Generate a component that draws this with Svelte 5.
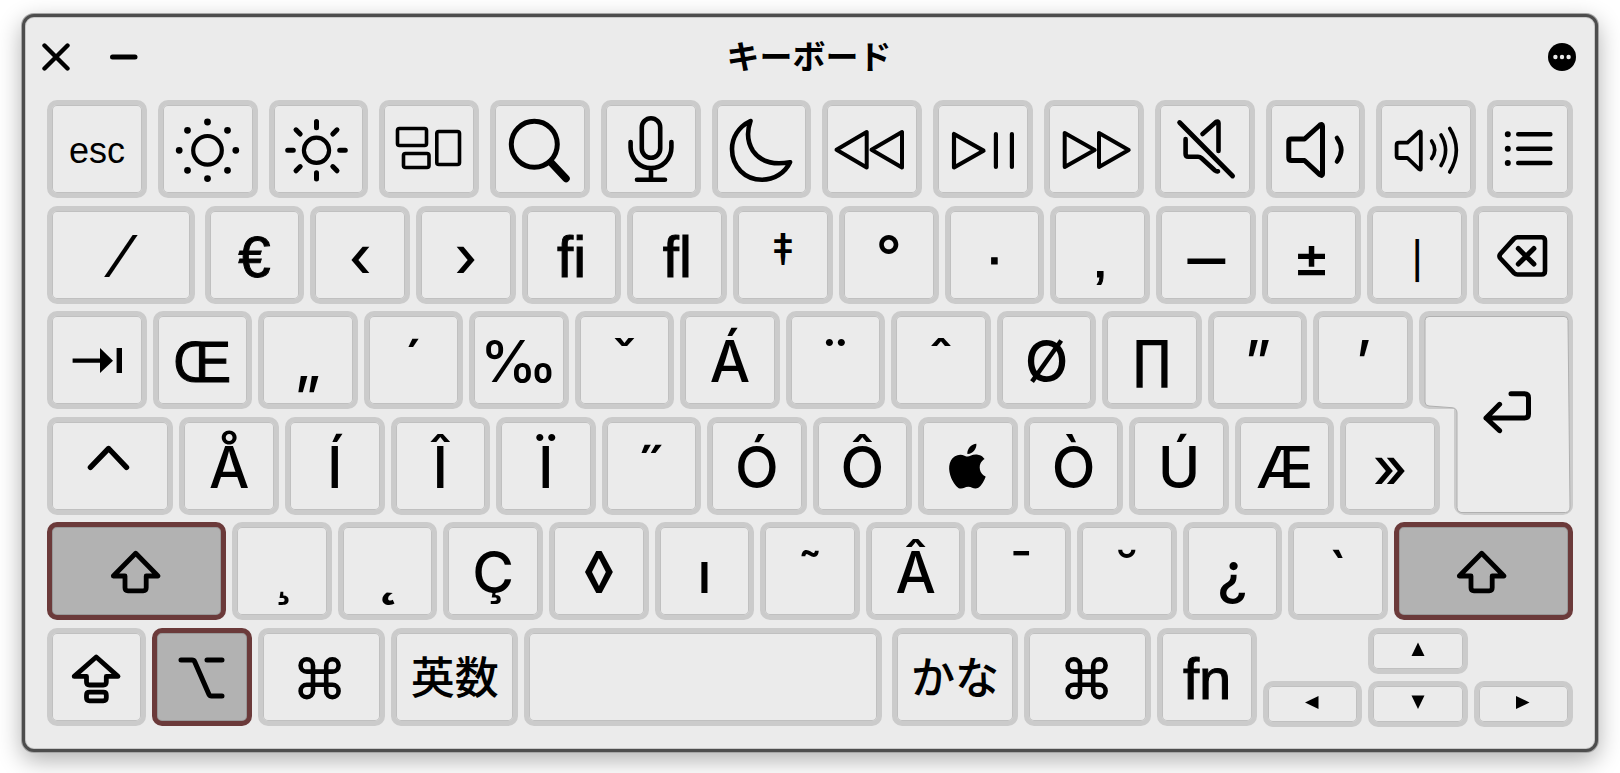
<script lang="ts">
interface Key {
  w: number;
  label?: string;
  icon?: string;
  name?: string;
  kind?: string;
  toggle?: boolean;
}

interface Icon {
  strokes?: [number, string][];
  fill?: string;
}

const circle = (x: number, y: number, r: number) =>
  `M${x - r} ${y}a${r} ${r} 0 1 0 ${2 * r} 0a${r} ${r} 0 1 0 ${-2 * r} 0z`;

// all icons are drawn around the centre of the key
const ICONS: Record<string, Icon> = {
  dim: {
    strokes: [[4.2, circle(-0.5, 1.3, 14.3)]],
    fill: [[0, -28.3], [20, -20], [28.3, 0], [20, 20], [0, 28.3], [-20, 20], [-28.3, 0], [-20, -20]]
      .map(([x, y]) => circle(x - 0.5, y + 1.3, 3.4))
      .join(''),
  },
  bright: {
    strokes: [
      [4.2, circle(-1.5, 1.3, 12.6)],
      [5, 'M-1.5-27.5v6.3M-1.5 23.8v6.3M-30.3 1.3h5.6M21.7 1.3h5.6M-22-19.2l4.2 4.2M19-19.2l-4.2 4.2M-22 21.8l4.2-4.2M19 21.8l-4.2-4.2'],
    ],
  },
  mission: {
    strokes: [[3.6, 'M-29.5-20.5h25q2 0 2 2v13q0 2-2 2h-25q-2 0-2-2v-13q0-2 2-2zM-23.5 4.5h21.5q2 0 2 2v10q0 2-2 2h-21.5q-2 0-2-2v-10q0-2 2-2zM9.8-17.5h18.7q2 0 2 2v29q0 2-2 2h-18.7q-2 0-2-2v-29q0-2 2-2z']],
  },
  search: { strokes: [[5, circle(-5.7, -4.7, 23)], [7.5, 'M11 13.5L26 29.5']] },
  mic: {
    strokes: [
      [4.6, 'M-9.2-21.6a9.2 9.2 0 0 1 18.4 0V-.4a9.2 9.2 0 0 1-18.4 0zM-20.4-7v5.6a20.4 20.4 0 0 0 40.8 0V-7M0 19V30M-14 30.7H14'],
    ],
  },
  moon: { strokes: [[4.6, 'M-11.5-28C-24-22-30-11-30 0C-30 18-17 30.7 0 30.7C12 30.7 23 24 28 13.2C10 16.5-2 12-9 2C-14-6-15.5-17-11.5-28z']] },
  rewind: { strokes: [[4, 'M-35.5.7L-5.3-17V18.4zM-.5.7L30-17V18.4z']] },
  play: { strokes: [[4.2, 'M-29-15V18.5L.5 1.7zM12.9-15V18M28.9-15V18']] },
  forward: { strokes: [[4, 'M-29.3-16V18L.7 1zM5-16V18L34.7 1z']] },
  mute: {
    strokes: [
      [4.8, 'M-25.4-26.5L27.6 27'],
      [4.6, 'M-2.5-15L11-27Q13.5-28 13.5-26V2M-19.4-10V5q0 2.7 2.7 2.7H-7q2 0 3.6 1.5L10 21.5q1.5 1.2 3 .8'],
    ],
  },
  low: {
    strokes: [
      [5, 'M-26.2-7.5q0-2.5 2.5-2.5H-10.5L5-24q2.5-1.5 2.5 1V25q0 2.5-2.5.8L-10.5 11.5H-23.5q-2.7 0-2.7-2.7z'],
      [4.6, 'M22-11Q30.5 1 22 12.5'],
    ],
  },
  high: {
    strokes: [
      [3.8, 'M-29.4-4q0-2.3 2.3-2.3H-18.5L-7-17q1.8-1.3 1.8.8V19.5q0 2-1.8.6L-18.5 9H-27q-2.4 0-2.4-2.3z'],
      [3.6, 'M5.6-8Q11.8.8 5.6 9.5M15-14Q24.2 1 15 16.5M23.7-20.5Q37 1 23.7 23'],
    ],
  },
  list: {
    strokes: [[4.4, 'M-11.8-14.7H20.4M-11.8-.2H20.4M-11.8 14H20.4']],
    fill: circle(-22.2, -14.7, 3) + circle(-22.2, -0.2, 3) + circle(-22.2, 14, 3),
  },
  backspace: {
    strokes: [
      [4.6, 'M-5.5-17.8H18.5q3.5 0 3.5 3.5V16q0 3.5-3.5 3.5H-5.5q-2 0-3.4-1.4L-22.5 3.5q-2-2.3 0-4.7L-8.9-16.4q1.4-1.4 3.4-1.4z'],
      [5, 'M-4.7-6.5L10.9 9.1M10.9-6.5L-4.7 9.1'],
    ],
  },
  tab: { fill: 'M-24.4-1.5H3V-12L16 .7L3 13V2.8H-24.4zM19.6-12H25V13H19.6z' },
  control: { strokes: [[5.4, 'M-19.6 1.3L-1.4-17.5L16.5 1.3']] },
  shift: { strokes: [[4.8, 'M-1.3-17.8L21 5H9.2V16.8q0 3-3 3H-9q-3 0-3-3V5H-23.7z']] },
  caps: { strokes: [[4.8, 'M-.8-20L21-.6H9.3V5q0 3-3 3H-7.5q-3 0-3-3V-.6H-22.8zM-7.5 15.2H6.3q3 0 3 3v2.6q0 3-3 3H-7.5q-3 0-3-3v-2.6q0-3 3-3z']] },
  option: { strokes: [[5, 'M-21-17H-10q2 0 2.7 1.7L7 17.5q.7 1.5 2.5 1.5H20M5-17H20']] },
  command: {
    strokes: [[4.6, 'M-8-5.4H5.2V7.8H-8zM-8-5.4H-14.2A6.2 6.2 0 1 1-8-11.6zM5.2-5.4V-11.6A6.2 6.2 0 1 1 11.4-5.4zM5.2 7.8H11.4A6.2 6.2 0 1 1 5.2 14zM-8 7.8V14A6.2 6.2 0 1 1-14.2 7.8z']],
  },
  up: { fill: 'M0-8.5L6.5 5H-6.5z' },
  down: { fill: 'M0 5L6.5-8.5H-6.5z' },
  left: { fill: 'M-7-1.5L6.5-8V5z' },
  right: { fill: 'M6.5-1.5L-7-8V5z' },
};

// signs that do not sit well in the plain letter style
const KINDS: Record<string, string> = {
  '€': 'sans',
  'fi': 'sans',
  'fl': 'sans',
  'Œ': 'sans',
  '·': 'sans',
  '‚': 'sans',
  '‡': 'dagger',
  '—': 'dash',
  '|': 'bar',
};

const row = (labels: string): Key[] =>
  labels.split(' ').map((label) => ({ w: 100, label, kind: KINDS[label] }));

const functionRow: Key[] = [
  { w: 100, label: 'esc', kind: 'small' },
  { w: 100, icon: 'dim', name: 'Brightness down' },
  { w: 100, icon: 'bright', name: 'Brightness up' },
  { w: 100, icon: 'mission', name: 'Mission Control' },
  { w: 100, icon: 'search', name: 'Spotlight' },
  { w: 100, icon: 'mic', name: 'Dictation' },
  { w: 100, icon: 'moon', name: 'Do not disturb' },
  { w: 100, icon: 'rewind', name: 'Rewind' },
  { w: 100, icon: 'play', name: 'Play or pause' },
  { w: 100, icon: 'forward', name: 'Fast forward' },
  { w: 100, icon: 'mute', name: 'Mute' },
  { w: 100, icon: 'low', name: 'Volume down' },
  { w: 100, icon: 'high', name: 'Volume up' },
  { w: 86, icon: 'list', name: 'Menu' },
];

const numberRow: Key[] = [
  { w: 148, label: '⁄', kind: 'spaced' },
  ...row('€ ‹ › fi fl ‡ ° · ‚ — ± |'),
  { w: 100, icon: 'backspace', name: 'Delete' },
];

const tabRow: Key[] = [{ w: 100, icon: 'tab', name: 'Tab' }, ...row('Œ „ ´ ‰ ˇ Á ¨ ˆ Ø ∏ ” ’')];

const controlRow: Key[] = [
  { w: 127, icon: 'control', name: 'Control' },
  ...row('Å Í Î Ï ˝ Ó Ô'),
  { w: 100, icon: 'apple', name: 'Apple' },
  ...row('Ò Ú Æ »'),
];

const shiftRow: Key[] = [
  { w: 180, icon: 'shift', name: 'Shift', toggle: true },
  ...row('¸ ˛ Ç ◊ ı ˜ Â ¯ ˘ ¿ `'),
  { w: 180, icon: 'shift', name: 'Shift', toggle: true },
];

const bottomRow: Key[] = [
  { w: 100, icon: 'caps', name: 'Caps Lock' },
  { w: 100, icon: 'option', name: 'Option', toggle: true },
  { w: 128, icon: 'command', name: 'Command' },
  { w: 128, label: '英数', kind: 'kana' },
  { w: 360, name: 'Space', kind: 'spaced' },
  { w: 127, label: 'かな', kind: 'kana' },
  { w: 128, icon: 'command', name: 'Command' },
  { w: 100, label: 'fn', kind: 'sans' },
];

// flex-grow only shares out what is left beside the two 5px borders
const BORDERS = 10;

let pressed: Record<string, boolean> = $state({ Shift: true, Option: true });

function press(key: Key) {
  if (key.toggle && key.name) pressed[key.name] = !pressed[key.name];
}
</script>

{#snippet glyph(name: string)}
  <svg class="icon" viewBox="-35 -35 70 70" aria-hidden="true">
    {#if name === 'apple'}
      <path
        transform="translate(-23 -22.3) scale(1.87)"
        d="M12.152 6.896c-.948 0-2.415-1.078-3.96-1.04-2.04.027-3.91 1.183-4.961 3.014-2.117 3.675-.546 9.103 1.519 12.09 1.013 1.454 2.208 3.09 3.792 3.039 1.52-.065 2.09-.987 3.935-.987 1.831 0 2.35.987 3.96.948 1.637-.026 2.676-1.48 3.676-2.948 1.156-1.688 1.636-3.325 1.662-3.415-.039-.013-3.182-1.221-3.22-4.857-.026-3.04 2.48-4.494 2.597-4.559-1.429-2.09-3.623-2.324-4.39-2.376-2-.156-3.675 1.09-4.61 1.09zM15.53 3.83c.843-1.012 1.4-2.427 1.245-3.83-1.207.052-2.662.805-3.532 1.818-.78.896-1.454 2.338-1.273 3.714 1.338.104 2.715-.688 3.559-1.701"
      />
    {:else}
      {#each ICONS[name].strokes ?? [] as [width, d]}
        <path class="line" stroke-width={width} {d} />
      {/each}
      {#if ICONS[name].fill}
        <path d={ICONS[name].fill} />
      {/if}
    {/if}
  </svg>
{/snippet}

{#snippet cap(key: Key)}
  <button
    class="key {key.kind ?? ''}"
    class:text={key.label}
    class:pressed={key.toggle && pressed[key.name ?? '']}
    style:flex-grow={key.w - BORDERS}
    aria-label={key.name}
    aria-pressed={key.toggle ? pressed[key.name ?? ''] : undefined}
    onclick={() => press(key)}
  >
    {#if key.icon}
      {@render glyph(key.icon)}
    {:else if key.label}
      {key.label}
    {/if}
  </button>
{/snippet}

<div class="desktop">
  <main class="window">
    <header class="titlebar">
      <div class="controls">
        <button class="control" aria-label="Close">
          <svg viewBox="0 0 28 28"><path class="line" stroke-width="4.4" d="M2.5 2.5L25.5 25.5M25.5 2.5L2.5 25.5" /></svg>
        </button>
        <button class="control" aria-label="Minimize">
          <svg viewBox="0 0 28 28"><path class="line" stroke-width="5" d="M2.5 14H25" /></svg>
        </button>
      </div>
      <h1>キーボード</h1>
      <button class="control more" aria-label="More">
        <svg viewBox="0 0 28 28">
          <circle cx="14" cy="14" r="14" />
          <g fill="#ebebeb">
            <circle cx="7.4" cy="14" r="2.2" />
            <circle cx="14" cy="14" r="2.2" />
            <circle cx="20.6" cy="14" r="2.2" />
          </g>
        </svg>
      </button>
    </header>

    <div class="keyboard">
      <div class="pair">
        <div class="row functions">
          {#each functionRow as key}{@render cap(key)}{/each}
        </div>
        <div class="row">
          {#each numberRow as key}{@render cap(key)}{/each}
        </div>
      </div>

      <div class="pair with-return">
        <button class="return" aria-label="Return">
          <svg viewBox="0 0 154 204" preserveAspectRatio="none">
            <path fill="#cbcbcb" d="M10 0H144a10 10 0 0 1 10 10V194a10 10 0 0 1-10 10H45a10 10 0 0 1-10-10V98H10A10 10 0 0 1 0 88V10A10 10 0 0 1 10 0z" />
            <path fill="#ebebeb" stroke="#b0b0b0" d="M10 5.5H145q4 0 4 4L151 196q0 5-4.5 5.5H42q-4-.5-4-5V102q0-5-5-5.3L10 95q-4-.3-4-4V9.5q0-4 4-4z" />
            <path class="line" stroke-width="5" d="M92 82.7H105.5q4 0 4 4V103q0 4-4 4H67M80.6 93.3L67 107L80.6 119.7" />
          </svg>
        </button>
        <div class="row tab-row">
          {#each tabRow as key}{@render cap(key)}{/each}
        </div>
        <div class="row control-row">
          {#each controlRow as key}{@render cap(key)}{/each}
        </div>
      </div>

      <div class="pair">
        <div class="row">
          {#each shiftRow as key}{@render cap(key)}{/each}
        </div>
        <div class="row">
          {#each bottomRow as key}{@render cap(key)}{/each}
          <div class="arrows">
            {#each ['up', 'left', 'down', 'right'] as dir}
              <button class="key {dir}" aria-label={dir}>{@render glyph(dir)}</button>
            {/each}
          </div>
        </div>
      </div>
    </div>
  </main>
</div>

<style>
:global(body) {
  margin: 0;
  background: #fff;
}

.desktop {
  box-sizing: border-box;
  min-height: 100vh;
  padding: 14px 22px 18px;
  overflow: hidden;
}

.window {
  border: 3px solid #4d4d4d;
  border-radius: 12px;
  background: #ebebeb;
  box-shadow:
    0 0 0 1px #a6a6a6,
    inset 0 0 0 1px #c8c8c8,
    0 8px 24px rgba(0, 0, 0, 0.32);
  color: #000;
}

.titlebar {
  display: grid;
  grid-template-columns: 1fr auto 1fr;
  align-items: center;
  box-sizing: border-box;
  height: 83px;
  padding: 0 19px 3px 17px;
}

.controls {
  display: flex;
  gap: 40px;
}

.control {
  width: 28px;
  height: 28px;
  padding: 0;
  border: 0;
  background: none;
}

.control svg {
  display: block;
  width: 100%;
  height: 100%;
}

.more {
  justify-self: end;
}

h1 {
  margin: 0;
  padding-bottom: 4px;
  font-family: "Noto Sans CJK JP", sans-serif;
  font-size: 33px;
  line-height: 40px;
  font-weight: 700;
}

.keyboard {
  display: flex;
  flex-direction: column;
  gap: 7px;
  padding: 0 22px 23px;
}

.pair {
  display: grid;
  grid-template-rows: 98px 98px;
  gap: 8px;
}

.row {
  display: flex;
  gap: 6px;
  min-width: 0;
}

.functions {
  gap: 11px;
}

.key {
  display: flex;
  flex: 1 1 0;
  align-items: center;
  justify-content: center;
  box-sizing: border-box;
  min-width: 0;
  padding: 0;
  border: 5px solid #cbcbcb;
  border-radius: 10px;
  background: #ebebeb;
  box-shadow: inset 0 0 0 1px #c0c0c0;
  color: #000;
  font: 500 57px/84px Inter, "Noto Sans CJK JP", sans-serif;
  white-space: nowrap;
}

.text {
  padding-top: 4px;
}

.sans {
  font-family: "Liberation Sans", Arial, sans-serif;
  font-size: 58px;
  font-variant-ligatures: none;
  -webkit-text-stroke: 1px #000;
}

.small {
  font-family: "Liberation Sans", Arial, sans-serif;
  font-size: 36px;
}

.dagger {
  padding: 0 0 12px;
  font-size: 44px;
}

.dash {
  padding-top: 16px;
  font-family: Roboto, sans-serif;
  line-height: 72px;
}

.bar {
  padding-top: 12px;
  font-size: 36px;
  line-height: 72px;
}

.kana {
  padding: 0 0 4px;
  font-family: "Noto Sans CJK JP", sans-serif;
  font-size: 44px;
}

.spaced {
  margin-right: 4px;
}

.pressed {
  border-color: #6b3a3a;
  background: #b2b2b2;
  box-shadow: inset 0 0 0 1px #999;
}

.icon {
  flex: none;
  width: 70px;
  height: 70px;
  overflow: visible;
}

.line {
  fill: none;
  stroke: #000;
  stroke-linecap: round;
  stroke-linejoin: round;
}

/* the return key reaches down past the end of the control row */
.with-return {
  grid-template-columns: minmax(0, 1366fr) 6px minmax(0, 21fr) minmax(0, 133fr);
  column-gap: 0;
}

.tab-row {
  grid-area: 1 / 1 / 2 / 2;
}

.control-row {
  grid-area: 2 / 1 / 3 / 4;
}

.return {
  grid-area: 1 / 3 / 3 / 5;
  padding: 0;
  border: 0;
  background: none;
}

.return svg {
  display: block;
  width: 100%;
  height: 100%;
}

.arrows {
  display: grid;
  flex: 270 1 42px;
  grid-template-columns: repeat(3, minmax(0, 1fr));
  grid-template-rows: 46px 46px;
  gap: 7px 6px;
}

.up {
  grid-column: 2;
}

.left {
  grid-column: 1;
}
</style>
